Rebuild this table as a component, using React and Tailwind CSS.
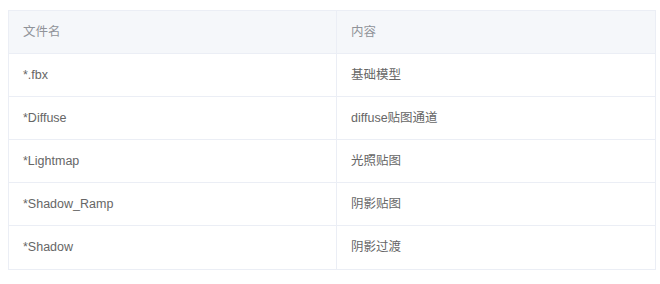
const rows = [
  ["*.fbx", "基础模型"],
  ["*Diffuse", "diffuse贴图通道"],
  ["*Lightmap", "光照贴图"],
  ["*Shadow_Ramp", "阴影贴图"],
  ["*Shadow", "阴影过渡"],
];

export default function App() {
  return (
    <div
      className="min-h-screen bg-white pt-[10px] pl-[8px] pr-[4px]"
      style={{ fontFamily: '"Liberation Sans", Arial, "Noto Sans CJK SC", sans-serif' }}
    >
      <div className="border border-[#ebeef5] text-[12.5px]">
        <div className="grid grid-cols-[328px_1fr] h-[43px] bg-[#f5f7fa] border-b border-[#ebeef5] text-[#909399]">
          <div className="flex items-center pl-[14px] border-r border-[#ebeef5]">文件名</div>
          <div className="flex items-center pl-[14px]">内容</div>
        </div>
        {rows.map((r, i) => (
          <div
            key={i}
            className={
              "grid grid-cols-[328px_1fr] h-[43px] text-[#666666] " +
              (i < rows.length - 1 ? "border-b border-[#ebeef5]" : "")
            }
          >
            <div className="flex items-center pl-[14px] border-r border-[#ebeef5]">{r[0]}</div>
            <div className="flex items-center pl-[14px]">{r[1]}</div>
          </div>
        ))}
      </div>
    </div>
  );
}
